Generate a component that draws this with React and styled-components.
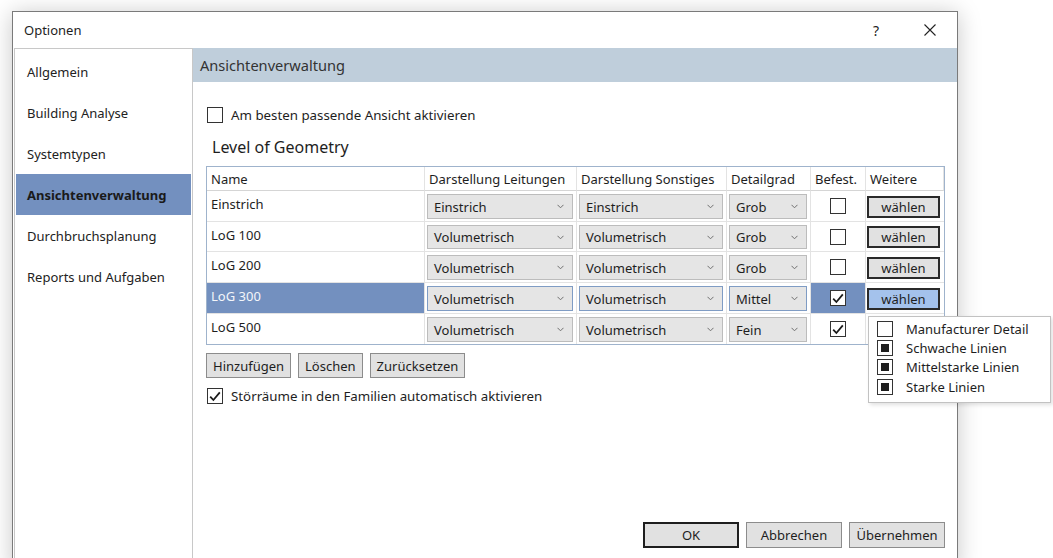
import React from "react";
import styled, { createGlobalStyle, css } from "styled-components";

const Global = createGlobalStyle`
  html, body { margin: 0; padding: 0; background: #ffffff; }
  body {
    font-family: "Noto Sans", "Open Sans", sans-serif;
    font-size: 13px;
    color: #1e1e1e;
    overflow: hidden;
  }
  * { box-sizing: border-box; }
`;

const Window = styled.div`
  margin: 11px 0 0 12px;
  width: 946px;
  height: 560px;
  background: #ffffff;
  border: 1px solid #7a7a7a;
  box-shadow: 0 2px 22px rgba(0, 0, 0, 0.22);
  display: flex;
  flex-direction: column;
`;

const TitleBar = styled.div`
  height: 36px;
  display: flex;
  align-items: center;
  padding: 0 0 0 11px;
  font-size: 13px;
`;

const TitleText = styled.div`
  flex: 1;
`;

const TitleButton = styled.div`
  width: 54px;
  height: 36px;
  display: flex;
  align-items: center;
  justify-content: center;
  color: #222;
  font-size: 14px;
`;

const Body = styled.div`
  flex: 1;
  display: flex;
  padding-left: 1px;
`;

const Sidebar = styled.nav`
  width: 180px;
  border: 1px solid #c8c8c8;
  border-bottom: none;
  padding: 2px 1px 0;
  display: flex;
  flex-direction: column;
`;

const NavItem = styled.div`
  height: 41px;
  display: flex;
  align-items: center;
  padding-left: 11px;
  font-size: 13px;
  color: #222;
  ${(p) =>
    p.$active &&
    css`
      background: #7390bf;
      font-weight: 700;
      color: #1a1a1a;
    `}
`;

const Main = styled.div`
  flex: 1;
  display: flex;
  flex-direction: column;
`;

const SectionHeader = styled.div`
  height: 34px;
  background: #bfcedb;
  display: flex;
  align-items: center;
  padding-left: 7px;
  font-size: 14.6px;
  color: #333;
`;

const Content = styled.div`
  flex: 1;
  padding: 24px 12px 22px 13px;
  display: flex;
  flex-direction: column;
  position: relative;
`;

const CheckRow = styled.label`
  display: flex;
  align-items: center;
  gap: 8px;
  height: 18px;
  margin: ${(p) => p.$top || 0}px 0 0 1px;
  font-size: 13.3px;
`;

const Box = styled.span`
  width: 16px;
  height: 16px;
  border: 1px solid #333;
  background: #fff;
  display: inline-flex;
  align-items: center;
  justify-content: center;
  flex: none;
  ${(p) =>
    p.$fill &&
    css`
      &::after {
        content: "";
        width: 8px;
        height: 8px;
        background: #1e1e1e;
      }
    `}
`;

const GroupTitle = styled.div`
  font-size: 16px;
  margin: 12px 0 0 6px;
  height: 22px;
  line-height: 22px;
`;

const Grid = styled.div`
  margin-top: 8px;
  width: 739px;
  border: 1px solid #9fb3cc;
  display: grid;
  grid-template-columns: 218px 152px 150px 84px 55px 78px;
  grid-template-rows: 24px 31px 30px 31px 31px 30px;
`;

const HeadCell = styled.div`
  display: flex;
  align-items: center;
  padding-left: 4px;
  border-right: 1px solid #e3e3e3;
  border-bottom: 1px solid #d5d5d5;
  &:last-child {
    border-right: none;
  }
`;

const Cell = styled.div`
  border-right: 1px solid #e3e3e3;
  border-bottom: 1px solid #e3e3e3;
  padding: 3px 3px 2px 2px;
  display: flex;
  align-items: stretch;
  background: ${(p) => (p.$sel ? "#7390bf" : "#fff")};
  ${(p) =>
    p.$last &&
    css`
      border-bottom: none;
    `}
  ${(p) =>
    p.$end &&
    css`
      border-right: none;
    `}
`;

const NameCell = styled(Cell)`
  padding: 4px 4px 0;
  align-items: flex-start;
  color: ${(p) => (p.$sel ? "#f4f6fa" : "#1e1e1e")};
`;

const CenterCell = styled(Cell)`
  align-items: center;
  justify-content: center;
  padding: 0;
`;

const Combo = styled.div`
  flex: 1;
  display: flex;
  align-items: center;
  justify-content: space-between;
  padding: 0 8px 0 6px;
  background: #e5e5e5;
  border: 1px solid ${(p) => (p.$sel ? "#7f9cc4" : "#bcbcbc")};
`;

const Chevron = () => (
  <svg width="7" height="5" viewBox="0 0 7 5">
    <path d="M0.5 0.8 L3.5 3.8 L6.5 0.8" fill="none" stroke="#707070" strokeWidth="1" />
  </svg>
);

const Tick = () => (
  <svg width="12" height="11" viewBox="0 0 12 11">
    <path d="M1.2 5.6 L4.4 9 L10.8 1.4" fill="none" stroke="#1a1a1a" strokeWidth="1.8" />
  </svg>
);

const PickButton = styled.div`
  flex: 1;
  margin: 3px 4px 2px 1px;
  display: flex;
  align-items: center;
  justify-content: center;
  background: ${(p) => (p.$sel ? "#a4c2ec" : "#e1e1e1")};
  border: 2px solid #2a2a2a;
  font-size: 13px;
`;

const ButtonRow = styled.div`
  display: flex;
  gap: 7px;
  margin-top: 8px;
`;

const Button = styled.div`
  height: 25px;
  padding: 0 6px;
  min-width: ${(p) => p.$w || 0}px;
  display: flex;
  align-items: center;
  justify-content: center;
  background: #e1e1e1;
  border: ${(p) => (p.$default ? "2px solid #1e1e1e" : "1px solid #8c8c8c")};
`;

const Footer = styled.div`
  margin-top: auto;
  align-self: flex-end;
  height: 26px;
  display: flex;
  gap: 7px;
  & > div {
    height: 26px;
  }
`;

const Popup = styled.div`
  position: absolute;
  left: 675px;
  top: 234px;
  width: 183px;
  padding: 2px 10px 6px 8px;
  background: #fff;
  border: 1px solid #c2c2c2;
  box-shadow: 2px 2px 4px rgba(0, 0, 0, 0.12);
  display: flex;
  flex-direction: column;
  z-index: 2;
`;

const PopupItem = styled.div`
  display: flex;
  align-items: center;
  gap: 13px;
  height: 19.3px;
`;

const Grip = styled.svg`
  position: absolute;
  right: 1px;
  bottom: 1px;
`;

const rows = [
  { name: "Einstrich", a: "Einstrich", b: "Einstrich", d: "Grob", fixed: false },
  { name: "LoG 100", a: "Volumetrisch", b: "Volumetrisch", d: "Grob", fixed: false },
  { name: "LoG 200", a: "Volumetrisch", b: "Volumetrisch", d: "Grob", fixed: false },
  { name: "LoG 300", a: "Volumetrisch", b: "Volumetrisch", d: "Mittel", fixed: true, sel: true },
  { name: "LoG 500", a: "Volumetrisch", b: "Volumetrisch", d: "Fein", fixed: true, underMenu: true },
];

const nav = [
  "Allgemein",
  "Building Analyse",
  "Systemtypen",
  "Ansichtenverwaltung",
  "Durchbruchsplanung",
  "Reports und Aufgaben",
];

const lineTypes = [
  { label: "Manufacturer Detail", on: false },
  { label: "Schwache Linien", on: true },
  { label: "Mittelstarke Linien", on: true },
  { label: "Starke Linien", on: true },
];

const gripDots = [
  [9, 1], [6, 4], [9, 4], [3, 7], [6, 7], [9, 7], [0, 10], [3, 10], [6, 10], [9, 10],
];

export default function App() {
  return (
    <>
      <Global />
      <Window>
        <TitleBar>
          <TitleText>Optionen</TitleText>
          <TitleButton>?</TitleButton>
          <TitleButton>
            <svg width="12" height="12" viewBox="0 0 12 12">
              <path d="M0.5 0.5 L11.5 11.5 M11.5 0.5 L0.5 11.5" stroke="#222" strokeWidth="1.1" />
            </svg>
          </TitleButton>
        </TitleBar>
        <Body>
          <Sidebar>
            {nav.map((n) => (
              <NavItem key={n} $active={n === "Ansichtenverwaltung"}>
                {n}
              </NavItem>
            ))}
          </Sidebar>
          <Main>
            <SectionHeader>Ansichtenverwaltung</SectionHeader>
            <Content>
              <CheckRow>
                <Box />
                Am besten passende Ansicht aktivieren
              </CheckRow>
              <GroupTitle>Level of Geometry</GroupTitle>
              <Grid>
                <HeadCell>Name</HeadCell>
                <HeadCell>Darstellung Leitungen</HeadCell>
                <HeadCell>Darstellung Sonstiges</HeadCell>
                <HeadCell>Detailgrad</HeadCell>
                <HeadCell>Befest.</HeadCell>
                <HeadCell>Weitere</HeadCell>
                {rows.map((r, i) => {
                  const last = i === rows.length - 1;
                  return (
                    <React.Fragment key={r.name}>
                      <NameCell $sel={r.sel} $last={last}>
                        {r.name}
                      </NameCell>
                      <Cell $last={last}>
                        <Combo $sel={r.sel}>
                          {r.a}
                          <Chevron />
                        </Combo>
                      </Cell>
                      <Cell $last={last}>
                        <Combo $sel={r.sel}>
                          {r.b}
                          <Chevron />
                        </Combo>
                      </Cell>
                      <Cell $last={last}>
                        <Combo $sel={r.sel}>
                          {r.d}
                          <Chevron />
                        </Combo>
                      </Cell>
                      <CenterCell $sel={r.sel} $last={last}>
                        <Box>{r.fixed && <Tick />}</Box>
                      </CenterCell>
                      <CenterCell $last={last} $end>
                        {!r.underMenu && <PickButton $sel={r.sel}>wählen</PickButton>}
                      </CenterCell>
                    </React.Fragment>
                  );
                })}
              </Grid>
              <ButtonRow>
                <Button>Hinzufügen</Button>
                <Button>Löschen</Button>
                <Button>Zurücksetzen</Button>
              </ButtonRow>
              <CheckRow $top={9}>
                <Box>
                  <Tick />
                </Box>
                Störräume in den Familien automatisch aktivieren
              </CheckRow>
              <Popup>
                {lineTypes.map((t) => (
                  <PopupItem key={t.label}>
                    <Box $fill={t.on} />
                    {t.label}
                  </PopupItem>
                ))}
              </Popup>
              <Footer>
                <Button $default $w={96}>OK</Button>
                <Button $w={96}>Abbrechen</Button>
                <Button $w={96}>Übernehmen</Button>
              </Footer>
              <Grip width="11" height="12" viewBox="0 0 11 12">
                {gripDots.map(([x, y]) => (
                  <rect key={`${x}-${y}`} x={x} y={y} width="2" height="2" fill="#c4c4c4" />
                ))}
              </Grip>
            </Content>
          </Main>
        </Body>
      </Window>
    </>
  );
}
